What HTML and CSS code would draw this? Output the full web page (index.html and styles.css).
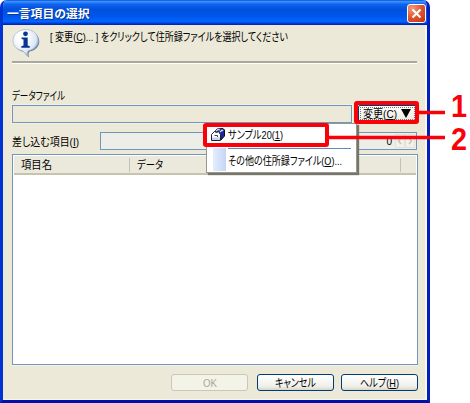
FILE: index.html
```
<!DOCTYPE html>
<html lang="ja">
<head>
<meta charset="utf-8">
<title>一言項目の選択</title>
<link rel="stylesheet" href="styles.css">
</head>
<body>
<main class="stage">
  <section class="window">
    <header class="titlebar">
      <h1>一言項目の選択</h1>
      <button class="close" aria-label="閉じる"><svg width="17" height="17" viewBox="0 0 17 17"><path d="M4.500 4.500l8 8M12.500 4.500l-8 8" stroke="#fff" stroke-width="2.100"/></svg></button>
    </header>
    <div class="content">
      <div class="message">
        <svg class="info" width="29" height="29" viewBox="0 0 29 29">
          <defs><radialGradient id="bubble" cx=".36" cy=".3" r=".75"><stop offset=".25" stop-color="#fff"/><stop offset=".75" stop-color="#dce7f5"/><stop offset="1" stop-color="#7898d0"/></radialGradient></defs>
          <path d="M14 1C6.700 1 1.500 5.500 1.500 11.800c0 5.200 3.800 9.300 9.500 10.100 1.300.2 2.200 3.700 5.500 5.600-.8-2.400-.7-4.800.5-5.700 5.700-1.200 9.700-4.900 9.700-10C26.700 5.500 21.300 1 14 1z" fill="#6c7c99" transform="translate(.6 .8)"/>
          <path d="M14 .5C6.700.5 1 5.300 1 11.500c0 5.200 3.800 9.300 9.500 10.200 1.300.2 2.200 3.700 5.500 5.300-.8-2.400-.7-4.400.5-5.400 5.700-1.200 9.700-4.900 9.700-10C26.200 5.300 21.300.5 14 .5z" fill="url(#bubble)" stroke="#a4b7d4" stroke-width=".7"/>
          <circle cx="13.500" cy="4.800" r="2.400" fill="#07358f"/>
          <path d="M9.500 8.500h6.200v8.100l2.100.7v1.500H9.300v-1.500l2.200-.7v-6l-2-.6z" fill="#07358f"/>
        </svg>
        <p class="t"><span class="t-message">[ 変更(<u>C</u>)... ] をクリックして住所録ファイルを選択してください</span></p>
      </div>
      <div class="label t"><span class="t-file">データファイル</span></div>
      <div class="file-row">
        <div class="field"></div>
        <div class="change-wrap"><button class="change t"><span class="t-change">変更(<u>C</u>)</span><svg width="10" height="9" viewBox="0 0 10 9"><path d="M0 0h10L5 9z" fill="#000"/></svg></button></div>
      </div>
      <div class="item-row">
        <div class="item-label t"><span class="t-item">差し込む項目(<u>I</u>)</span></div>
        <div class="item-field"><span>0</span><svg width="20" height="14" viewBox="0 0 20 14"><path d="M.500.500h9v13h-9zM10.500.500h9v13h-9z" fill="#f2f1ea" stroke="#e3e1d8"/><path d="M6 4L3.500 7 6 10M14 4l2.500 3-2.500 3" fill="none" stroke="#c7c5b8" stroke-width="1.500"/></svg></div>
      </div>
      <div class="table">
        <div class="thead"><div class="t"><span class="t-name">項目名</span></div><div class="t"><span class="t-data">データ</span></div><div></div></div>
      </div>
      <footer>
        <button class="t disabled"><span class="t-ok">OK</span></button>
        <button class="t cancel"><span class="t-cancel">キャンセル</span></button>
        <button class="t"><span class="t-help">ヘルプ(<u>H</u>)</span></button>
      </footer>
    </div>
  </section>
  <div class="menu">
    <div class="choice"><svg width="14" height="13" viewBox="0 0 14 13"><path d="M3.500 4L6 1l6-.5 1.500 1.500v6L10 12z" fill="#1c28a0" stroke="#111"/><path d="M5 3l2-1.500 2 .5M9 4l2-2 1 1" fill="none" stroke="#dce5f5" stroke-width="1.200"/><path d="M.500 6.500l3-3 2 1 2-1 2 3v6H.500z" fill="#fff" stroke="#222"/><path d="M1 9.500h8V12H1z" fill="#bdd3f8"/><path d="M3.500 7.500h3v1.500" fill="none" stroke="#445"/></svg><div class="t"><span class="t-sample">サンプル20(<u>1</u>)</span></div></div>
    <div class="rest"><div class="gutter"></div><div class="other t"><span class="t-other">その他の住所録ファイル(<u>O</u>)...</span></div></div>
  </div>
  <svg class="callouts" width="470" height="403" viewBox="0 0 470 403">
    <g fill="none" stroke="#fa0008"><rect x="356" y="103" width="61" height="19" rx="1" stroke-width="4"/><rect x="205" y="125" width="122" height="20" rx="1" stroke-width="4"/><path d="M419 112.500h26M329 137.500h116" stroke-width="3.500"/></g>
    <text x="451" y="116.500" textLength="16" lengthAdjust="spacingAndGlyphs">1</text><text x="451" y="150" textLength="16" lengthAdjust="spacingAndGlyphs">2</text>
  </svg>
</main>
<script src="fit.js"></script>
</body>
</html>
```
FILE: styles.css
```
* { box-sizing: border-box; }
body { margin: 0; background: #fff; color: #000; font: 12px "Liberation Sans", "Noto Sans CJK JP", sans-serif; }
button { font: inherit; color: inherit; padding: 0; margin: 0; }
.stage { position: relative; width: 470px; height: 403px; overflow: hidden; }
.window { width: 430px; height: 403px; display: flex; flex-direction: column; border: solid #0032d4; border-width: 0 3px 3px; border-right-color: #001fbe; border-bottom-color: #0010a8; border-radius: 7px 7px 0 0; background: #ece9d8; overflow: hidden; }
.titlebar { height: 25px; flex: none; margin: 0 -3px; padding: 4px 4px 0 7px; display: flex; justify-content: space-between; background: linear-gradient(#0a4cd5 0, #3892ff 6%, #1263ec 17%, #0050df 38%, #0056e9 65%, #0065ff 86%, #0038d2 94%, #001fa7); }
h1 { margin: 0; color: #fff; font: bold 11.8px/18px "Noto Sans CJK JP", sans-serif; text-shadow: 1px 1px #073492; white-space: nowrap; }
.close { width: 19px; height: 19px; border: 1px solid #fff; border-radius: 3px; background: radial-gradient(circle at 25% 20%, #f09a7d, #e0542f 50%, #bd330c); }
.close svg { display: block; }
.content { flex: 1; padding: 0 6px 0 9px; border: 1px solid #f9f7eb; border-width: 0 2px 1px 0; }
.t { white-space: nowrap; }
.t span { display: inline-block; font: 11.5px/14px "Liberation Sans", "Noto Sans CJK JP", sans-serif; font-feature-settings: "palt"; transform-origin: left center; }
u { text-underline-offset: 1px; }
.message { height: 39px; width: 405px; display: flex; border-bottom: 1px solid #fff; box-shadow: inset 0 -2px #aaa89b; }
.message .info { margin: 4px 0 0; }
.message p { margin: 5px 0 0 9px; width: 240px; }
.label { height: 41px; padding-top: 25px; }
.file-row { display: flex; height: 18px; }
.field { width: 340px; height: 18px; border: 1px solid #7095be; box-shadow: 0 0 0 1px #f4f1e3; }
.change-wrap { width: 59px; height: 18px; margin-left: 6px; }
.change { display: flex; align-items: center; gap: 4px; width: 59px; height: 17px; border: 1px solid #003c74; border-radius: 2px; background: linear-gradient(#fff, #ece9df); outline: 1px dotted #777; outline-offset: -3px; padding-left: 4px; }
.item-row { display: flex; margin-top: 9px; height: 18px; }
.item-label { width: 88px; padding-top: 3px; }
.item-field { width: 317px; border: 1px solid #7095be; display: flex; align-items: center; justify-content: flex-end; gap: 3px; background: #eeeee9; font-size: 10px; }
.item-field svg { margin-right: 1px; }
.table { margin-top: 4px; width: 406px; height: 211px; border: 1px solid #7095be; padding-top: 1px; background: #fff; box-shadow: 0 1px #f9f5e5; }
.thead { display: grid; grid-template-columns: 116px 271px 1fr; height: 19px; background: #ebe8dc; border-bottom: 2px solid #c6c3b1; margin: 0 1px; }
.thead div { border-right: 1px solid #c5c2b5; margin: 2px 0; padding-left: 7px; line-height: 12px; }
.thead div:last-child { border: 0; }
footer { display: flex; justify-content: flex-end; margin: 9px -1px 0 0; gap: 7px; width: 406px; }
footer button { width: 77px; height: 17px; border: 1px solid #003c74; border-radius: 3px; background: linear-gradient(#fff, #f0f0ea 75%, #d9d5cb); display: flex; justify-content: center; align-items: center; }
footer .disabled { color: #aaa899; background: #f4f3e8; border-color: #c9c7ba; margin-right: 2px; }
.menu { position: absolute; left: 206px; top: 123px; width: 151px; height: 50px; background: #fff; border: 1px solid #96978d; box-shadow: 2px 2px 1px #77756a; }
.choice { display: flex; height: 24px; padding: 4px 0 0 4px; gap: 3px; }
.choice .t { line-height: 12px; }
.rest { display: flex; height: 24px; padding-left: 6px; }
.gutter { width: 13px; height: 23px; background: linear-gradient(90deg, #e4edff, #c5d5f2); }
.other { flex: 1; margin: 0 5px 0 2px; border-top: 1px solid #6388b9; padding-top: 5px; }
.callouts { position: absolute; left: 0; top: 0; }
.callouts text { fill: #fa0008; font: bold 30.5px "Liberation Sans", sans-serif; }
```
FILE: fit.js
```
const widths = {
  "t-message": 238, "t-file": 53, "t-change": 34, "t-item": 67,
  "t-name": 31, "t-data": 26, "t-ok": 14, "t-cancel": 41,
  "t-help": 39, "t-sample": 55, "t-other": 114
};
for (const [name, width] of Object.entries(widths)) {
  const label = document.querySelector("." + name);
  const natural = label.getBoundingClientRect().width;
  label.style.transform = `scaleX(${width / natural})`;
  label.style.marginRight = `${width - natural}px`;
}
```
